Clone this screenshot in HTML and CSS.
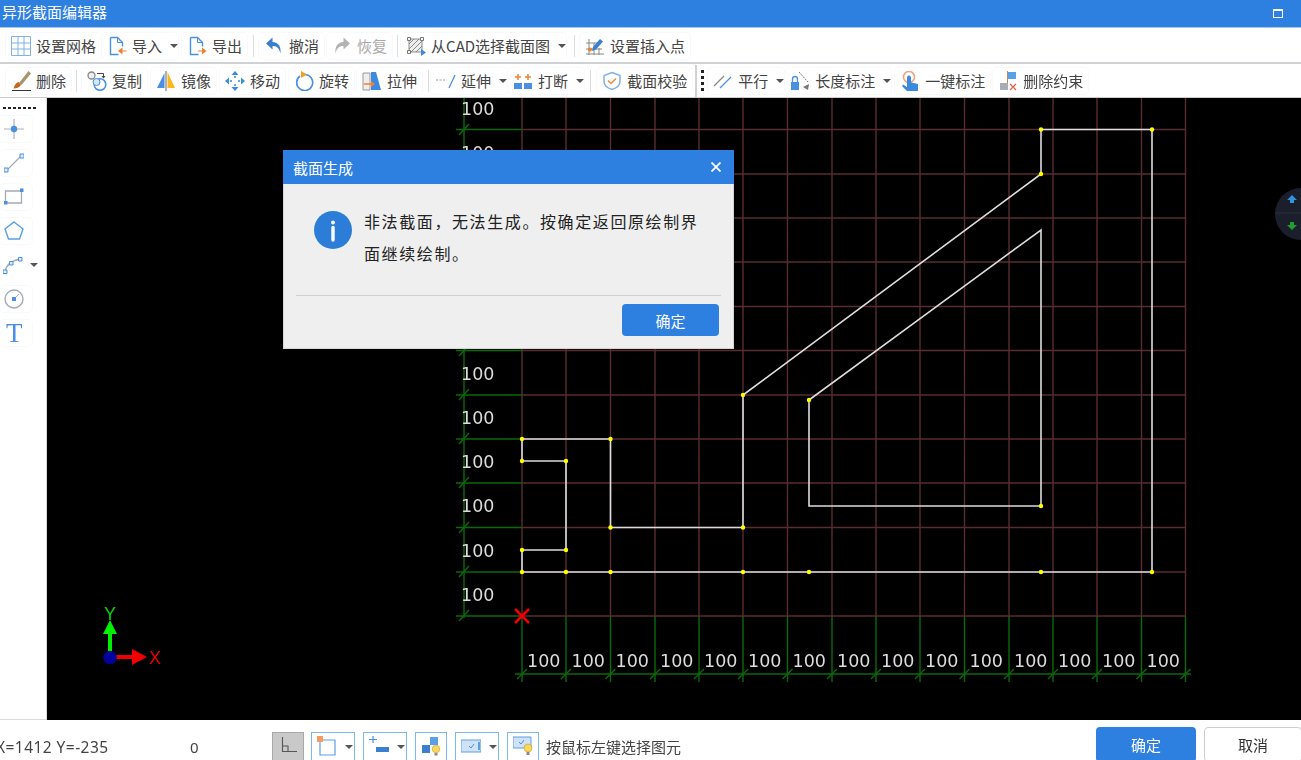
FILE: index.html
```html
<!DOCTYPE html>
<html lang="zh-CN">
<head>
<meta charset="utf-8">
<title>异形截面编辑器</title>
<link rel="stylesheet" href="styles.css">
</head>
<body>
<div class="app">
  <header class="titlebar">
    <span class="title">异形截面编辑器</span>
    <span class="maximize"></span>
  </header>

  <div class="toolbar t1">
    <div class="btn"><svg class="ic" viewBox="0 0 20 20"><path d="M.5 .5h19v19H.5zM.5 7h19M.5 13h19M7 .5v19M13 .5v19" fill="none" stroke="#7fb2ea"/></svg><span>设置网格</span></div>
    <div class="btn nr m1"><svg class="ic" viewBox="0 0 20 20"><path d="M3.500 1.500h7l5 5v4M3.500 1.500v17h8" fill="none" stroke="#4a90e2" stroke-width="1.400"/><path d="M10.500 1.500v5h5" fill="none" stroke="#4a90e2"/><path d="M19.500 14.500h-4v-3l-4.500 3.500 4.500 3.500v-3h4z" fill="#f5802c"/></svg><span>导入</span><i class="caret"></i></div>
    <div class="btn m4"><svg class="ic" viewBox="0 0 20 20"><path d="M3.500 1.500h7l5 5v4M3.500 1.500v17h8" fill="none" stroke="#4a90e2" stroke-width="1.400"/><path d="M10.500 1.500v5h5" fill="none" stroke="#4a90e2"/><path d="M11 14.500h4v-3l4.500 3.500-4.500 3.500v-3h-4z" fill="#f5802c"/></svg><span>导出</span></div>
    <i class="sep m6"></i>
    <div class="btn m5"><svg class="ic" viewBox="0 0 20 20"><path d="M8.500 1.500 2 7.500l6.500 6V10c4 0 6.500 1.500 8 7.500 .7-7-2-11-8-11.500z" fill="#3a7fd0"/></svg><span>撤消</span></div>
    <div class="btn m3 off"><svg class="ic" viewBox="0 0 20 20"><path d="M11.500 1.500 18 7.500l-6.500 6V10c-4 0-6.500 1.500-8 7.500-.7-7 2-11 8-11.500z" fill="#b3b3b3"/></svg><span>恢复</span></div>
    <i class="sep m5"></i>
    <div class="btn nr m3"><svg class="ic" viewBox="0 0 20 20"><path d="M3 3h13v13H3z" fill="#eee" stroke="#8a8a8a"/><path d="M3 8l5-5M3 13 13 3M5 16 16 5M10 16l6-6" stroke="#8a8a8a"/><path d="M1.500 1.500h3v3h-3zM14.500 1.500h3v3h-3zM1.500 14.500h3v3h-3z" fill="#fff" stroke="#777"/><path d="M15 13l5 3.500-5 3.500z" fill="#3a8ae0"/></svg><span>从CAD选择截面图</span><i class="caret"></i></div>
    <i class="sep m8"></i>
    <div class="btn m5"><svg class="ic" viewBox="0 0 20 20"><path d="M1 7h15M1 13h16M1 18h18M4 3v16M9 7v12M14 12v7" stroke="#888" fill="none"/><path d="M8 11 15 3l3 2.500-7 8-4 1.500z" fill="#3a7fd0"/><circle cx="5" cy="13.500" r="2" fill="#f5802c"/></svg><span>设置插入点</span></div>
  </div>

  <div class="toolbar t2">
    <div class="btn"><svg class="ic" viewBox="0 0 20 20"><path d="M8 12 17.500 0 20 2.500 10.500 14z" fill="#a8946f"/><path d="M7.500 11c-2.500 .5-3.500 2.500-5 6.500 3 0 6-1 7.500-3.500z" fill="#c8651f"/><path d="M1 19.500h19" stroke="#333"/></svg><span>删除</span></div>
    <i class="sep m5"></i>
    <div class="btn m5"><svg class="ic" viewBox="0 0 20 20"><circle cx="4.500" cy="4.500" r="3.500" fill="#eee" stroke="#888" stroke-width="1.300"/><circle cx="13" cy="13.500" r="5.800" fill="none" stroke="#4a90e2" stroke-width="1.500"/><circle cx="9.500" cy="11" r="3.500" fill="#d5e6f8" stroke="#4a90e2"/><path d="M10 2.500h6.500v3" fill="none" stroke="#444"/><path d="M14.500 5h4l-2 2.500z" fill="#444"/></svg><span>复制</span></div>
    <div class="btn m4"><svg class="ic" viewBox="0 0 20 20"><path d="M8.500 2 1 17h7.500z" fill="#4a90e2"/><path d="M11.500 1 19 17h-7.500z" fill="#fbb81f"/><path d="M10 0v20" stroke="#666"/></svg><span>镜像</span></div>
    <div class="btn m4"><svg class="ic" viewBox="0 0 20 20"><path d="M10 0l3.500 4h-7zM10 20l-3.500-4h7zM0 10l4-3.500v7zM20 10l-4 3.500v-7z" fill="#3a8ae0"/><path d="M10 5v2M10 13v2M5 10h2M13 10h2" stroke="#3a8ae0" stroke-width="1.500"/></svg><span>移动</span></div>
    <div class="btn m4"><svg class="ic" viewBox="0 0 20 20"><path d="M6 5a8 8 0 1 0 5-1.500" fill="none" stroke="#4a90e2" stroke-width="1.600"/><path d="M7 0l6 3.500-6 3.500z" fill="#f59a23"/></svg><span>旋转</span></div>
    <div class="btn m3"><svg class="ic" viewBox="0 0 20 20"><path d="M1 2h7v17H1z" fill="#eee" stroke="#999"/><path d="M9 1h5l5 18H9z" fill="#3a8ae0"/><path d="M2 13h8" stroke="#f5802c" stroke-width="1.500"/><path d="M9 10l4 3-4 3z" fill="#f5802c"/></svg><span>拉伸</span></div>
    <i class="sep m6"></i>
    <div class="btn nr m2"><svg class="ic" viewBox="0 0 20 20"><path d="M0 9h11" stroke="#999" stroke-dasharray="2 1.500"/><path d="M13 17 19 4" stroke="#4a90e2" stroke-width="1.300"/></svg><span>延伸</span><i class="caret"></i></div>
    <div class="btn nr m1"><svg class="ic" viewBox="0 0 20 20"><path d="M1 12h8v6H1zM11 12h8v6h-8z" fill="#4a90e2"/><path d="M5 3v6M2 6h6M15 3v6M12 6h6" stroke="#f5802c" stroke-width="1.500"/></svg><span>打断</span><i class="caret"></i></div>
    <i class="sep m6"></i>
    <div class="btn m6"><svg class="ic" viewBox="0 0 20 20"><path d="M10 1.500 18 4.500v6c0 4-3.500 6.500-8 8-4.500-1.500-8-4-8-8v-6z" fill="none" stroke="#7fb2ea" stroke-width="1.500"/><path d="M6 9.500l3 3 5-5" fill="none" stroke="#f08a3c" stroke-width="1.500"/></svg><span>截面校验</span></div>
    <i class="sep heavy m3"></i>
    <i class="vdots m4"></i>
    <div class="btn nr m4"><svg class="ic" viewBox="0 0 20 20"><path d="M1 15 11 5" stroke="#888" stroke-width="1.300"/><path d="M7 17 18 6" stroke="#4a90e2" stroke-width="1.300"/></svg><span>平行</span><i class="caret"></i></div>
    <div class="btn nr m1"><svg class="ic" viewBox="0 0 20 20"><path d="M1 11h8v8H1z" fill="#4a90e2"/><path d="M2.500 11V8a2.500 2.500 0 0 1 5 0v3" fill="none" stroke="#4a90e2" stroke-width="1.300"/><path d="M9 1l9 10" stroke="#777" stroke-dasharray="2 1"/><path d="M13 16l6-3-1 6z" fill="#777"/></svg><span>长度标注</span><i class="caret"></i></div>
    <div class="btn m4"><svg class="ic" viewBox="0 0 20 20"><circle cx="9" cy="6" r="5.500" fill="none" stroke="#f3a37a" stroke-width="1.600"/><path d="M7 6.500a2 2 0 0 1 4 0v5l7 1.500v7H7l-5-5 1-1.500 4 2.500z" fill="#3a8ae0"/></svg><span>一键标注</span></div>
    <div class="btn m3"><svg class="ic" viewBox="0 0 20 20"><path d="M9.500 0v12" stroke="#c08a50"/><path d="M10 1h8v7h-8z" fill="#5a9fe8"/><path d="M2 12h8v7H2z" fill="#a6adb5"/><path d="M12 13l6 6M18 13l-6 6" stroke="#e8604c" stroke-width="1.300"/></svg><span>删除约束</span></div>
  </div>

  <div class="main">
    <aside class="leftbar">
      <i class="hdots"></i>
      <div class="tool"><svg viewBox="0 0 20 20"><path d="M0 10h7M13 10h7M10 0v7M10 13v7" stroke="#a9b2bb" stroke-width="1.200"/><circle cx="10" cy="10" r="3.200" fill="#4a90e2"/></svg></div>
      <div class="tool"><svg viewBox="0 0 20 20"><path d="M2.500 17.500 17.500 2.500" stroke="#a3abb3" stroke-width="1.300"/><path d="M0 15h4v4H0zM16 1h4v4h-4z" fill="#dcebfa" stroke="#4a90e2"/></svg></div>
      <div class="tool"><svg viewBox="0 0 20 20"><path d="M1.500 4h16v12h-16z" fill="none" stroke="#a3abb3" stroke-width="1.300"/><path d="M0 14h3.500v3.500H0zM16 1.500h3.500V5H16z" fill="#4a90e2"/></svg></div>
      <div class="tool"><svg viewBox="0 0 20 20"><path d="M10 1 19 8l-3.500 10h-11L1 8z" fill="none" stroke="#5a9fe8" stroke-width="1.400"/></svg></div>
      <div class="tool drop"><svg viewBox="0 0 20 20"><path d="M2 17C3 10 7 6 17 4" fill="none" stroke="#a3abb3" stroke-width="1.300"/><path d="M0 15h4v3.500H0zM6.500 6.500H10V10H6.500zM15.500 2.500H19V6h-3.500z" fill="#dcebfa" stroke="#4a90e2"/></svg><i class="caret small"></i></div>
      <div class="tool"><svg viewBox="0 0 20 20"><circle cx="10" cy="10" r="9" fill="none" stroke="#a3abb3" stroke-width="1.400"/><path d="M10 10l5-5" stroke="#a3abb3"/><path d="M8 8h4v4H8z" fill="#4a90e2"/></svg></div>
      <div class="tool letter">T</div>
    </aside>

    <div class="canvas">
      <svg class="drawing" viewBox="47 98 1254 622">
        <g fill="none" stroke="#5a2c2e" stroke-width="1.400">
          <path d="M522 98V616M566 98V616M610.500 98V616M655 98V616M699 98V616M743 98V616M787.500 98V616M832 98V616M876 98V616M920 98V616M964.500 98V616M1009 98V616M1053 98V616M1097 98V616M1141.500 98V616M1185.500 98V616"/>
          <path d="M522 129.500H1185.500M522 174H1185.500M522 218H1185.500M522 262H1185.500M522 306.500H1185.500M522 350.500H1185.500M522 395H1185.500M522 439H1185.500M522 483H1185.500M522 527.500H1185.500M522 572H1185.500M522 616H1185.500"/>
        </g>
        <g fill="none" stroke="#0a6a0a" stroke-width="1.400">
          <path d="M464 98V618M522 616V682M566 616V682M610.500 616V682M655 616V682M699 616V682M743 616V682M787.500 616V682M832 616V682M876 616V682M920 616V682M964.500 616V682M1009 616V682M1053 616V682M1097 616V682M1141.500 616V682M1185.500 616V682"/>
          <path d="M456 129.500H522M456 174H522M456 218H522M456 262H522M456 306.500H522M456 350.500H522M456 395H522M456 439H522M456 483H522M456 527.500H522M456 572H522M456 616H522M515 674H1191"/>
          <path d="M459 135l10-11M459 179l10-11M459 223l10-11M459 267l10-11M459 312l10-11M459 356l10-11M459 400l10-11M459 444l10-11M459 488l10-11M459 533l10-11M459 577l10-11M459 621l10-11"/>
          <path d="M517 679l10-10M561 679l10-10M605.500 679l10-10M650 679l10-10M694 679l10-10M738 679l10-10M782.500 679l10-10M827 679l10-10M871 679l10-10M915 679l10-10M959.500 679l10-10M1004 679l10-10M1048 679l10-10M1092 679l10-10M1136.500 679l10-10M1180.500 679l10-10"/>
        </g>
        <g fill="none" stroke="#dcdcdc" stroke-width="1.600">
          <path d="M522 572H1152V129.500H1041V174L743 395V527.500H610.500V439H522V461H566V550H522V572"/>
          <path d="M809 400 1041 230V506H809Z"/>
        </g>
        <g fill="#ffff00">
          <circle cx="1041" cy="129.500" r="2.200"/><circle cx="1152" cy="129.500" r="2.200"/><circle cx="1041" cy="174" r="2.200"/><circle cx="743" cy="395" r="2.200"/><circle cx="809" cy="400" r="2.200"/><circle cx="522" cy="439" r="2.200"/><circle cx="610.500" cy="439" r="2.200"/><circle cx="522" cy="461" r="2.200"/><circle cx="566" cy="461" r="2.200"/><circle cx="610.500" cy="527.500" r="2.200"/><circle cx="743" cy="527.500" r="2.200"/><circle cx="1041" cy="506" r="2.200"/><circle cx="522" cy="550" r="2.200"/><circle cx="566" cy="550" r="2.200"/><circle cx="522" cy="572" r="2.200"/><circle cx="566" cy="572" r="2.200"/><circle cx="610.500" cy="572" r="2.200"/><circle cx="743" cy="572" r="2.200"/><circle cx="809" cy="572" r="2.200"/><circle cx="1041" cy="572" r="2.200"/><circle cx="1152" cy="572" r="2.200"/>
        </g>
        <g class="dim">
          <text x="461" y="115">100</text><text x="461" y="159">100</text>
          <text x="461" y="380">100</text><text x="461" y="424">100</text><text x="461" y="468">100</text><text x="461" y="512">100</text><text x="461" y="557">100</text><text x="461" y="601">100</text>
          <text x="527" y="667">100</text><text x="571.500" y="667">100</text><text x="615.500" y="667">100</text><text x="660" y="667">100</text><text x="704" y="667">100</text><text x="748" y="667">100</text><text x="792.500" y="667">100</text><text x="837" y="667">100</text><text x="881" y="667">100</text><text x="925" y="667">100</text><text x="969.500" y="667">100</text><text x="1014" y="667">100</text><text x="1058" y="667">100</text><text x="1102" y="667">100</text><text x="1146.500" y="667">100</text>
        </g>
        <path d="M515 609l14 14M529 609l-14 14" stroke="#f00000" stroke-width="2.600"/>
        <path d="M108 657V634h-5l7-14 7 14h-5V657z" fill="#00f000"/>
        <path d="M110 655h22v-6l15 8-15 8v-6h-22z" fill="#f00000"/>
        <circle cx="110" cy="657.500" r="6.800" fill="#00009c"/>
        <text class="axis ay" x="104" y="620">Y</text>
        <text class="axis ax" x="149" y="664">X</text>
        <circle cx="1301" cy="214" r="26" fill="#1a1f2b"/>
        <path d="M1275 213h26" stroke="#2c313c"/>
        <path d="M1292 195l5 5h-3v3h-4v-3h-3z" fill="#2f93dd"/>
        <path d="M1292 230l5-5h-3v-3h-4v3h-3z" fill="#1f9e2d"/>
      </svg>
    </div>
  </div>

  <footer class="statusbar">
    <span class="coords">X=1412 Y=-235</span>
    <span class="zero">0</span>
    <div class="sbtools">
      <div class="sb pressed"><svg viewBox="0 0 20 20"><path d="M4.500 1v14.500H19M4.500 10H10v5.500" fill="none" stroke="#555" stroke-width="1.100"/></svg></div>
      <div class="sb wide"><svg viewBox="0 0 20 20"><path d="M3 4h15v15H3z" fill="none" stroke="#5a9fe8" stroke-width="1.200"/><path d="M0 0h6v6H0z" fill="#f59a5c"/></svg><i class="caret"></i></div>
      <div class="sb wide"><svg viewBox="0 0 20 20"><path d="M4 0v7M0 3.500h8" stroke="#4a90e2" stroke-width="1.200"/><path d="M7 11h13v5H7z" fill="#3a7fd0"/></svg><i class="caret"></i></div>
      <div class="sb"><svg viewBox="0 0 20 20"><path d="M9 1h8v8H9z" fill="#5a9fe8"/><path d="M1 9h8v8H1z" fill="#3a7fd0"/><circle cx="15" cy="13" r="3.800" fill="#f9d65c" stroke="#c8a030" stroke-width=".6"/><path d="M13.500 17h3v2.500h-3z" fill="#888"/></svg></div>
      <div class="sb wide"><svg viewBox="0 0 20 20"><path d="M0 4h20v12H0z" fill="#cfe2f7" stroke="#5a9fe8"/><path d="M8 10l2 2 3-4" fill="none" stroke="#4a90e2"/><path d="M17 6h2v8h-2z" fill="#5a9fe8"/></svg><i class="caret"></i></div>
      <div class="sb"><svg viewBox="0 0 20 20"><path d="M0 1h18v11H0z" fill="#cfe2f7" stroke="#5a9fe8"/><path d="M6 6l2 2 3-4" fill="none" stroke="#4a90e2"/><circle cx="15" cy="12" r="4" fill="#f9d65c" stroke="#c8a030" stroke-width=".6"/><path d="M13.500 16h3v3h-3z" fill="#888"/></svg></div>
    </div>
    <span class="hint">按鼠标左键选择图元</span>
    <div class="actions">
      <button class="primary ok">确定</button>
      <button class="cancel">取消</button>
    </div>
  </footer>

  <div class="dialog">
    <div class="dlghead"><span>截面生成</span><svg class="close" viewBox="0 0 10 10"><path d="M.500 .500l9 9M9.500 .500l-9 9" stroke="#fff" stroke-width="1.700"/></svg></div>
    <div class="dlgbody">
      <svg class="info" viewBox="0 0 38 38"><circle cx="19" cy="19" r="19" fill="#2b7dd8"/><circle cx="19" cy="11.500" r="2" fill="#fff"/><path d="M19 16.500V29" stroke="#fff" stroke-width="3.400" stroke-linecap="round"/></svg>
      <p class="msg">非法截面，无法生成。按确定返回原绘制界面继续绘制。</p>
    </div>
    <div class="dlgfoot"><button class="primary dlgok">确定</button></div>
  </div>
</div>
</body>
</html>
```

FILE: styles.css
```css
* { box-sizing: border-box; }
html, body { margin: 0; padding: 0; }
body { font-family: "Noto Sans CJK SC", "Noto Sans", sans-serif; color: #444; background: #fff; overflow: hidden; }
i { display: block; font-style: normal; flex: none; }

.app { position: relative; width: 1301px; height: 760px; display: flex; flex-direction: column; overflow: hidden; filter: blur(.35px); }

.titlebar { height: 28px; flex: none; background: #2d7fe0; border-bottom: 1px solid #a9c8ee; display: flex; align-items: center; justify-content: space-between; padding: 0 18px 3px 2px; color: #fff; font-size: 15px; }
.title { line-height: 22px; }
.maximize { width: 10px; height: 9px; margin-top: 2px; border: 1px solid #fff; border-top-width: 2px; }

.toolbar { display: flex; align-items: center; flex: none; background: #fff; font-size: 15px; padding-left: 6px; }
.t1 { height: 36px; border-bottom: 2px solid #cfd1d4; padding-top: 2px; }
.t2 { height: 34px; border-bottom: 1px solid #c9cbce; padding-top: 1px; }

.btn { display: flex; align-items: center; gap: 5px; height: 26px; padding: 0 5px; border-radius: 4px; box-shadow: 0 0 0 1px #f8f9fa; white-space: nowrap; flex: none; }
.btn.nr { padding-right: 0; }
.btn span { line-height: 20px; }
.btn.off { color: #aaa; }
.ic { width: 20px; height: 20px; flex: none; display: block; }
.caret { width: 0; height: 0; border: 4px solid transparent; border-top: 4px solid #555; border-bottom: 0; margin-left: 3px; }
.caret.small { margin-left: 4px; }

.sep { width: 1px; height: 22px; background: #dcdddf; }
.sep.heavy { width: 2px; height: 32px; background: #cfd1d4; }
.vdots { width: 3px; height: 22px; background: repeating-linear-gradient(#222 0 3px, transparent 3px 6px); }
.m1 { margin-left: 1px; } .m2 { margin-left: 2px; } .m3 { margin-left: 3px; } .m4 { margin-left: 4px; } .m5 { margin-left: 5px; } .m6 { margin-left: 6px; } .m8 { margin-left: 8px; }

.main { flex: 1; display: flex; min-height: 0; }
.leftbar { width: 47px; flex: none; background: #fff; border-right: 1px solid #d9dadc; border-bottom: 1px solid #d9dadc; padding: 9px 0 0 0; display: flex; flex-direction: column; gap: 8px; }
.hdots { width: 33px; height: 2px; margin-left: 3px; margin-bottom: -1px; background: repeating-linear-gradient(90deg, #222 0 3px, transparent 3px 5px); }
.tool { width: 32px; height: 26px; display: flex; align-items: center; padding-left: 4px; border-radius: 4px; box-shadow: 0 0 0 1px #f8f9fa; }
.tool svg { width: 20px; height: 20px; display: block; flex: none; }
.tool.drop { box-shadow: none; width: 42px; padding-left: 3px; }
.tool.drop .caret { margin-left: 7px; }
.tool.letter { font-family: "Liberation Serif", serif; font-size: 27px; color: #4a90e2; line-height: 26px; padding-left: 6px; }

.canvas { flex: 1; background: #000; min-width: 0; }
.drawing { display: block; width: 100%; height: 100%; }
.dim text { font-family: "DejaVu Sans", sans-serif; font-size: 17.500px; fill: #dcdcdc; }
.axis { font-family: "Liberation Sans", sans-serif; font-size: 18px; }
.ay { fill: #00d800; }
.ax { fill: #e80000; }

.statusbar { height: 40px; flex: none; background: #fff; display: flex; align-items: flex-start; position: relative; font-size: 14px; }
.coords { font-family: "Noto Sans", sans-serif; font-size: 15.500px; letter-spacing: .45px; margin-left: -4px; width: 194px; flex: none; line-height: 19px; padding-top: 18px; white-space: nowrap; color: #444; }
.zero { font-family: "Noto Sans", sans-serif; font-size: 15px; width: 82px; flex: none; line-height: 19px; padding-top: 18px; }
.sbtools { display: flex; gap: 8px; padding-top: 12px; flex: none; }
.sb { width: 32px; height: 32px; border: 1px solid #7db8f2; display: flex; align-items: flex-start; padding: 3px 0 0 5px; }
.sb svg { width: 20px; height: 20px; flex: none; display: block; }
.sb.wide { width: 44px; }
.sb.wide .caret { margin-left: 8px; margin-top: 9px; }
.sb.pressed { background: #c9c9c9; border-color: #a8a8a8; margin-right: -1px; }
.hint { font-size: 15px; line-height: 20px; padding-top: 17px; margin-left: 7px; white-space: nowrap; flex: none; }
.actions { display: flex; gap: 8px; margin-left: auto; padding-top: 7px; margin-right: -1px; }

button { font-family: inherit; cursor: pointer; }
.primary { background: #2d7fe0; color: #fff; border: 0; border-radius: 4px; font-size: 15px; }
.ok { width: 100px; height: 35px; }
.cancel { width: 98px; height: 35px; background: #fff; border: 1px solid #cfcfcf; border-radius: 4px; font-size: 15px; color: #333; }

.dialog { position: absolute; left: 283px; top: 150px; width: 451px; height: 199px; background: #efefef; border: 1px solid #d4d6d9; border-top: 0; display: flex; flex-direction: column; }
.dlghead { height: 34px; flex: none; margin: 0 -1px; background: #2d7fe0; color: #fff; font-size: 15px; display: flex; align-items: center; justify-content: space-between; padding: 0 13px 0 10px; }
.close { width: 10px; height: 10px; display: block; }
.dlgbody { flex: none; height: 112px; display: flex; align-items: flex-start; gap: 12px; padding: 27px 0 0 18px; border-bottom: 1px solid #cdcfd2; margin: 0 12px; }
.info { width: 38px; height: 38px; flex: none; display: block; }
.msg { margin: -6px 0 0 0; width: 342px; font-size: 16px; letter-spacing: 1.600px; line-height: 32px; color: #222; }
.dlgfoot { display: flex; justify-content: flex-end; padding: 8px 14px 0 0; }
.dlgok { width: 97px; height: 32px; font-size: 15px; }
```
